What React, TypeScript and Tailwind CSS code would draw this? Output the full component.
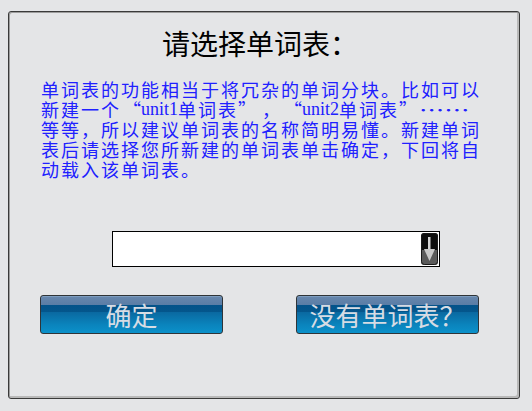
import React from 'react';

const cjk = { fontFamily: '"Noto Sans CJK SC", sans-serif' };

const Latin: React.FC<{ children: React.ReactNode }> = ({ children }) => (
  <span className="tracking-normal leading-[20px]" style={{ fontFamily: '"Liberation Serif", serif' }}>
    {children}
  </span>
);

// full-width quote cell, glyph pushed toward the word it wraps
const Quote: React.FC<{ open?: boolean }> = ({ open }) => (
  <span className={open ? 'inline-block w-[20px] text-right tracking-normal' : 'inline-block w-[20px] text-left tracking-normal'}>
    {open ? '“' : '”'}
  </span>
);

const BlueButton: React.FC<{ label: string }> = ({ label }) => (
  <button
    className="flex h-[39px] w-[183px] items-center justify-center rounded-[3px] border border-[#2f3438] text-[26px] leading-none text-[#d6dce4] shadow-[inset_0_1px_0_#7d9dc0] bg-[linear-gradient(to_bottom,#6787ad_0%,#5a7da6_24%,#03538a_25%,#04568c_42%,#0a69a1_44%,#0a76ae_60%,#0a84bd_78%,#0b91ca_100%)]"
  >
    {label}
  </button>
);

const DropArrow: React.FC = () => (
  <svg width="17" height="32" viewBox="0 0 17 32" className="block">
    <defs>
      <clipPath id="round">
        <rect x="0" y="0" width="17" height="32" rx="3" />
      </clipPath>
    </defs>
    <g clipPath="url(#round)">
      <rect x="0" y="0" width="17" height="17" fill="#0d0d0d" />
      <rect x="0" y="17" width="17" height="15" fill="#5a5a5a" />
    </g>
    <rect x="0.5" y="0.5" width="16" height="31" rx="3" fill="none" stroke="#1a1a1a" />
    <rect x="7" y="4" width="2.5" height="14" fill="#d4d4d4" />
    <polygon points="3,16 14,16 8.5,28" fill="#c8c8c8" />
  </svg>
);

export default function App() {
  return (
    <div className="h-[411px] w-[532px] bg-[#e4e5e7] pl-[8px] pt-[11px]" style={cjk}>
      <div className="flex h-[388px] w-[512px] flex-col rounded-[3px] border border-[#3a3a3a] shadow-[inset_1px_1px_0_#9d9d9d,inset_-2px_-2px_0_#b9b9b9]">
        <h1 className="mt-[15px] pr-[8px] text-center text-[28px] leading-[32px] font-normal text-black">
          请选择单词表：
        </h1>

        <div className="mt-[20px] pl-[32px] text-[18px] leading-[20px] tracking-[2px] whitespace-nowrap text-[#2020ff]">
          <div className="h-[20px]">单词表的功能相当于将冗杂的单词分块。比如可以</div>
          <div className="flex h-[20px] items-center">
            <span>新建一个</span>
            <Quote open />
            <Latin>unit1</Latin>
            <span>单词表</span>
            <Quote />
            <span className="ml-[4px]">，</span>
            <Quote open />
            <Latin>unit2</Latin>
            <span>单词表</span>
            <Quote />
            <span className="inline-block origin-left scale-x-[1.4] tracking-normal">……</span>
          </div>
          <div className="h-[20px]">等等，所以建议单词表的名称简明易懂。新建单词</div>
          <div className="h-[20px]">表后请选择您所新建的单词表单击确定，下回将自</div>
          <div className="h-[20px]">动载入该单词表。</div>
        </div>

        <div className="mt-[52px] ml-[103px] flex h-[36px] w-[328px] items-center justify-end border border-black bg-white pr-[1px]">
          <DropArrow />
        </div>

        <div className="mt-[28px] flex gap-[73px] pl-[31px]">
          <BlueButton label="确定" />
          <BlueButton label="没有单词表？" />
        </div>
      </div>
    </div>
  );
}
